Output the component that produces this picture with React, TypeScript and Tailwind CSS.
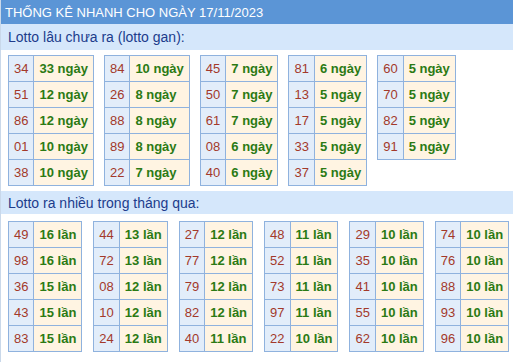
import React from 'react';

const gan: [string, string][][] = [
  [['34', '33'], ['51', '12'], ['86', '12'], ['01', '10'], ['38', '10']],
  [['84', '10'], ['26', '8'], ['88', '8'], ['89', '8'], ['22', '7']],
  [['45', '7'], ['50', '7'], ['61', '7'], ['08', '6'], ['40', '6']],
  [['81', '6'], ['13', '5'], ['17', '5'], ['33', '5'], ['37', '5']],
  [['60', '5'], ['70', '5'], ['82', '5'], ['91', '5']],
];

const nhieu: [string, string][][] = [
  [['49', '16'], ['98', '16'], ['36', '15'], ['43', '15'], ['83', '15']],
  [['44', '13'], ['72', '13'], ['08', '12'], ['10', '12'], ['24', '12']],
  [['27', '12'], ['77', '12'], ['79', '12'], ['82', '12'], ['40', '11']],
  [['48', '11'], ['52', '11'], ['73', '11'], ['97', '11'], ['22', '10']],
  [['29', '10'], ['35', '10'], ['41', '10'], ['55', '10'], ['62', '10']],
  [['74', '10'], ['76', '10'], ['88', '10'], ['93', '10'], ['96', '10']],
];

const Box = ({ rows, unit }: { rows: [string, string][]; unit: string }) => (
  <table className="border-collapse self-start">
    <tbody>
      {rows.map(([n, v], i) => (
        <tr key={i} className="h-[26px]">
          <td className="border border-[#8fb2de] bg-[#e2edfa] px-[5px] text-center text-[#a3392a] whitespace-nowrap">{n}</td>
          <td className="border border-[#8fb2de] bg-[#fff4e2] px-[5px] font-bold text-[#2b7a14] whitespace-nowrap">
            {v} {unit}
          </td>
        </tr>
      ))}
    </tbody>
  </table>
);

export default function App() {
  return (
    <div className="w-[513px] h-[362px] bg-white border-l border-[#c9d8ea] text-[13px] leading-none" style={{ fontFamily: '"Liberation Sans", Arial, sans-serif' }}>
      <div className="h-[24px] bg-[#5b95d6] text-white pl-[4px] flex items-center text-[13px] whitespace-nowrap">
        THỐNG KÊ NHANH CHO NGÀY 17/11/2023
      </div>
      <div className="h-[26px] bg-[#d5e7fb] text-[#203c8c] pl-[7px] flex items-center text-[14px]">
        Lotto lâu chưa ra (lotto gan):
      </div>
      <div className="flex gap-[10px] pl-[7px] pt-[5px]">
        {gan.map((r, i) => (
          <Box key={i} rows={r} unit="ngày" />
        ))}
      </div>
      <div className="h-[23px] mt-[5px] bg-[#d5e7fb] text-[#203c8c] pl-[7px] flex items-center text-[14px]">
        Lotto ra nhiều trong tháng qua:
      </div>
      <div className="flex gap-[11px] pl-[7px] pt-[7px]">
        {nhieu.map((r, i) => (
          <Box key={i} rows={r} unit="lần" />
        ))}
      </div>
    </div>
  );
}
